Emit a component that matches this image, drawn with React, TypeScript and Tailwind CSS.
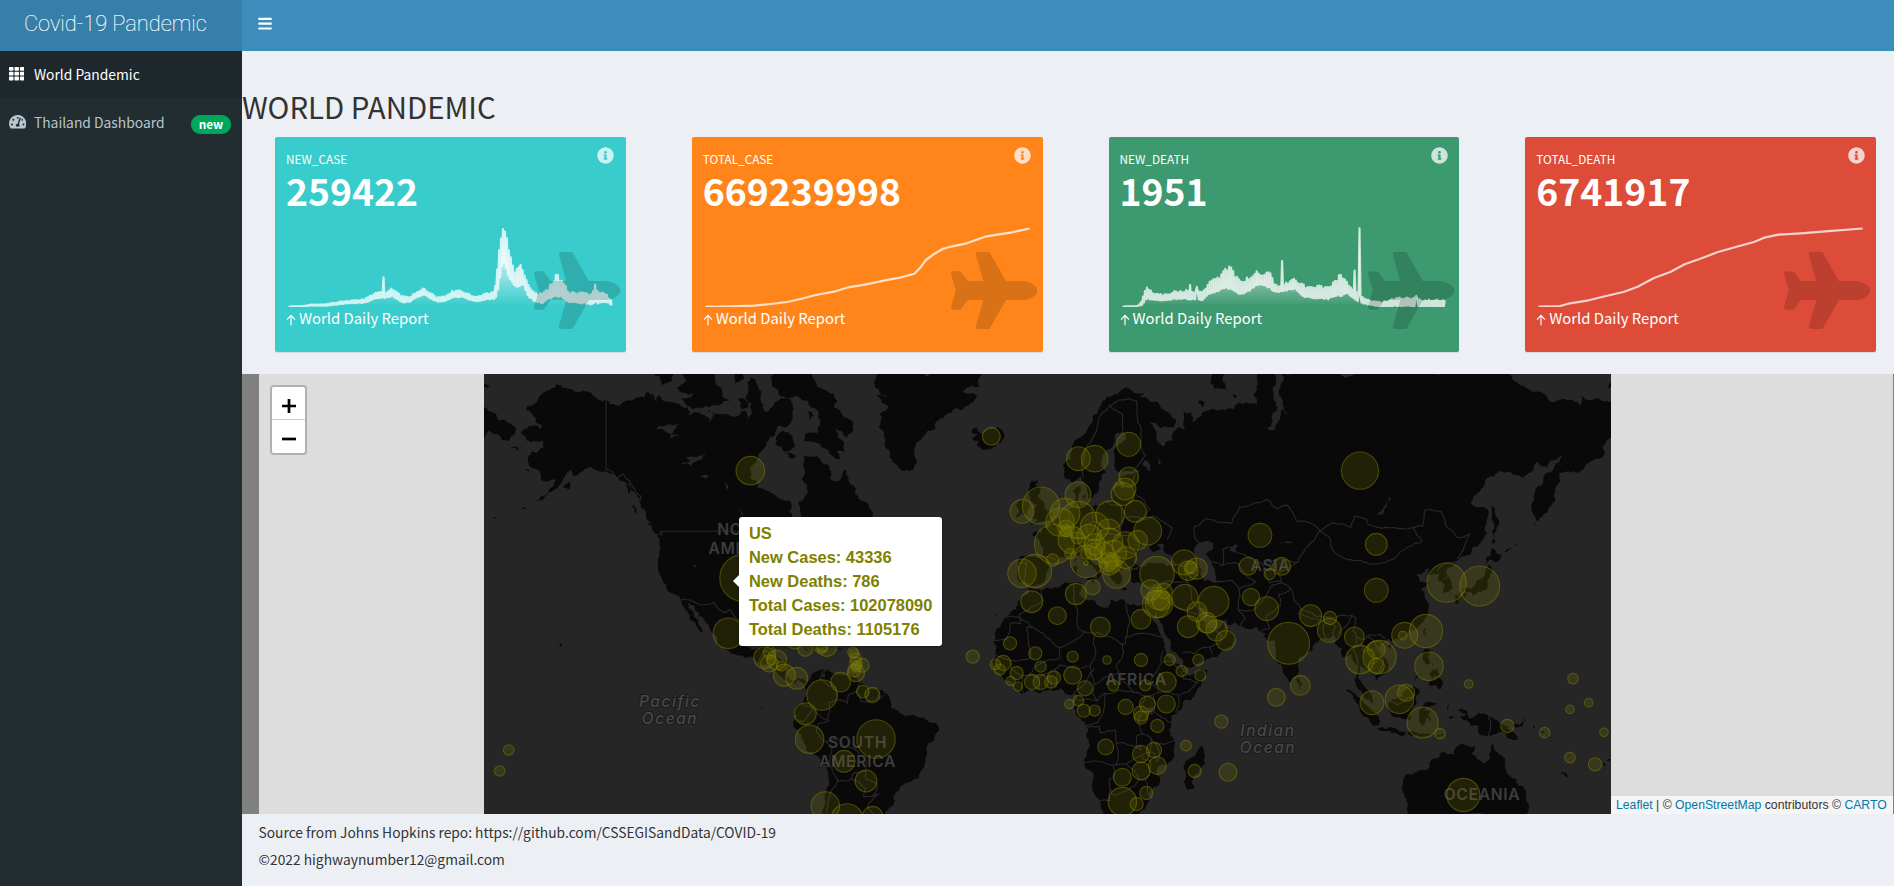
import React from "react";
import { FaBars, FaInfoCircle, FaPlane, FaTachometerAlt, FaTh } from "react-icons/fa";

/* ------------------------------------------------------------------ */
/* Map geometry                                                        */
/* ------------------------------------------------------------------ */

const WORLD = 1126.6;
const EQUATOR = 333.7;

type Pt = [number, number];

function project(lon: number, lat: number): Pt {
  const r = (lat * Math.PI) / 180;
  const m = Math.log(Math.tan(Math.PI / 4 + r / 2));
  return [((lon + 180) / 360) * WORLD, EQUATOR - (m * WORLD) / (2 * Math.PI)];
}

function parse(s: string): Pt[] {
  return s.trim().split(/\s+/).map((p) => {
    const [a, b] = p.split(",").map(Number);
    return project(a, b);
  });
}

function random(seed: number) {
  let s = seed;
  return () => {
    s = (s * 16807) % 2147483647;
    return s / 2147483647 - 0.5;
  };
}

/* Midpoint displacement gives coasts their ragged outline. */
function roughen(pts: Pt[], closed: boolean, amount: number): Pt[] {
  const rnd = random(pts.length * 97 + 13);
  let cur = closed ? [...pts, pts[0]] : pts;
  for (let k = 0; k < 3; k++) {
    const next: Pt[] = [cur[0]];
    for (let i = 1; i < cur.length; i++) {
      const [x0, y0] = cur[i - 1];
      const [x1, y1] = cur[i];
      const dx = x1 - x0;
      const dy = y1 - y0;
      if (Math.hypot(dx, dy) > 3) {
        const d = rnd() * amount;
        next.push([(x0 + x1) / 2 - dy * d, (y0 + y1) / 2 + dx * d]);
      }
      next.push([x1, y1]);
    }
    cur = next;
  }
  return cur;
}

function toPath(s: string, closed: boolean, amount: number) {
  return (
    "M" +
    roughen(parse(s), closed, amount)
      .map(([x, y]) => x.toFixed(1) + " " + y.toFixed(1))
      .join("L") +
    (closed ? "Z" : "")
  );
}

const LAND: string[] = [
  // Americas
  `-168.1,65.6 -166,66.3 -164,66.6 -161.8,66.1 -161.5,66.5 -163.5,67.1 -164.5,68 -166.4,68.4 -166.2,68.9 -163.5,69.3 -162.5,70 -160,70.6 -156.7,71.3 -154.5,70.9 -152,70.8 -149.5,70.5 -145,70 -141,69.6 -137.5,69 -135.5,69.4 -134,69.6 -131,69.9 -129,69.9 -128,70.5 -125,69.5 -124.3,70.1 -123,69.6 -120,69.4 -117,68.9 -115,68.8 -114,68.2 -115,67.9 -110,67.9 -108,67.4 -107.8,66.7 -106.5,68 -108.5,68.5 -105,68 -101,67.7 -98.5,67.8 -97.8,68.4 -96,68.2 -96,67.2 -94.5,68 -94.5,69.3 -96.4,70 -95.9,71.5 -94.6,72 -92.5,71.2 -91.8,69.7 -90.3,68.3 -88,68.8 -85.5,69.7 -84,69.8 -82,69.7 -81.3,69 -81.5,68.2 -81.3,67.4 -83.2,66.4 -85.8,66.6 -87,65.3 -89.8,64 -90.7,63.4 -92.5,62.6 -94.3,61 -94.7,60 -94.7,58.8 -93.2,58.7 -92.7,57.2 -90.8,57.2 -88.5,56.5 -85.5,55.3 -82.3,55.1 -82.3,53 -81.5,52 -80.5,51.3 -79,51.4 -78.7,52.5 -79.2,54 -79.6,54.7 -77.8,55.3 -76.5,56.5 -76.7,57.8 -78.5,58.8 -77.5,59.8 -77.8,60.8 -78,62.4 -75.8,62.3 -73.8,62.4 -71.5,61.2 -69.7,61 -69.5,59 -68,58.4 -66,58.8 -65.3,59.9 -64.5,60.3 -63.5,59 -62,57.7 -61.5,56.3 -60,55.2 -57.5,54.6 -57,53.7 -55.8,52.7 -56,51.9 -58.5,51.2 -60.2,50.2 -66.5,50.2 -68,49.2 -70,47.5 -68.3,48.5 -65,49.2 -64.3,48.8 -65.2,47.8 -64,46.1 -61,45.4 -65.5,43.5 -64.8,45.4 -67,45.1 -70.6,43.2 -70,41.8 -74,40.7 -75.2,38.8 -75.8,35.5 -79,33.3 -81.4,30.5 -80.2,26 -81,25.2 -82.7,28 -84,30 -88,30.3 -89.3,29.2 -94,29.6 -97,28 -97.4,26 -97.8,22.5 -97,20.5 -96,19 -94.5,18.2 -92,18.6 -90.7,19.5 -90.4,21 -87,21.5 -87.5,19.5 -88.2,17.5 -88.8,15.9 -86,15.9 -83.3,15 -83.6,12.5 -83.7,11 -82.5,9.3 -81,8.8 -79.5,9.5 -77.4,8.6 -76.8,8.2 -75.6,9.5 -75.3,10.7 -74,11.3 -71.7,12.4 -71.3,11.5 -71.9,10.4 -71.6,9.4 -71,9.8 -71.3,11 -70,12.1 -69.5,11.4 -68.3,10.7 -66,10.5 -64,10.5 -62.5,10.7 -61.8,9.8 -60.5,8.5 -58.5,7.3 -57,6 -54,5.9 -51.8,4.5 -50,1.8 -50,0.3 -48,-0.7 -44.5,-2.5 -41.5,-2.9 -39.5,-3 -37.2,-4.8 -35.3,-5.2 -34.8,-7.5 -36,-10.2 -38.5,-13 -39,-16 -39.7,-19 -41,-22 -44,-23.1 -46.5,-24.2 -48.5,-26 -48.7,-28.5 -50.5,-30.5 -52.5,-33 -54,-34.8 -58,-34 -62,-39 -73,-39 -71.7,-31 -71.2,-28 -70.6,-25 -70.2,-20 -70.4,-18.3 -72.5,-17 -76.2,-14 -77.2,-12 -78.8,-8.5 -79.8,-7 -81.2,-6 -81.3,-4.6 -80.3,-3.4 -79.8,-2.3 -80.9,-2.2 -80.5,-0.6 -79.9,0.9 -78.8,1.6 -77.2,3.8 -77.5,6.5 -78.2,8 -79.5,9 -80.4,8.2 -80.3,7.4 -82.2,7.8 -83.6,8.5 -85,9.8 -85.8,10.5 -87.5,12.9 -89.5,13.5 -92,14.5 -94.5,16.2 -96.5,15.7 -99.5,16.7 -102,18 -104.5,19.2 -105.5,20.4 -105.5,22 -108,25 -109.4,26.7 -111,28 -112.3,29.5 -113,31.1 -114.8,31.8 -114.7,30.3 -113,28.4 -111.5,26.5 -110.5,24.5 -109.5,23.1 -110.3,23.5 -112,25 -112.3,26.2 -114.3,27.2 -114.2,28.3 -115.8,30.2 -117.1,32.5 -118.4,33.8 -120.6,34.5 -121.8,36.6 -123.7,38.9 -124.4,40.4 -124.2,42 -124.5,43 -123.9,46.2 -124.7,48.4 -122.5,47.5 -122.8,49 -124.5,50 -127,51 -128.3,53 -130.3,54.7 -131,56 -133.5,58 -136,58.5 -139.5,59.6 -143,60 -146,60.8 -148.5,60 -151.5,59.3 -151.5,61 -154,59.4 -156.5,57.3 -161,55.3 -164.8,54.6 -162,55.8 -160,56 -157.7,57.6 -157,58.8 -159,58.5 -162,58.7 -162,59.8 -164.5,60.5 -166,61.6 -164.7,63.1 -161,63.6 -161,64.5 -163.5,64.5 -166.3,64.6`,
  // Greenland
  `-55,73.5 -55.5,71.5 -54,70.8 -51,70 -54.8,70.2 -53,69.3 -51,69 -53.5,68 -53.8,66.5 -52,64 -50,62 -48,61 -44,60 -42.8,60.3 -42.5,62.5 -40,65 -36,66 -32,68 -27,68.5 -22.5,70.1 -27,70.6 -24,71.2 -21.8,71 -22,73.5`,
  // Canadian Arctic
  `-90,74 -88,71.2 -85,70 -82,69.9 -79,69.9 -76,69 -73,68.2 -72.5,67 -73.5,65.5 -77.5,65.3 -78,64.5 -74.5,64.4 -72,63.6 -68.8,62.5 -66,62 -67.5,63.2 -64.8,62.8 -65,64 -68,66.2 -64,65 -62,66.8 -64,67.5 -68,68.7 -67,69.5 -71,70.7 -75,72 -78,73.5`,
  `-87,64 -84,63 -80.5,63.8 -84.5,65.9`,
  `-76.5,68.3 -74.5,67.8 -76,67.2`,
  `-84,62.8 -82,62 -80,62.5`,
  `-105,69 -101.5,69.5 -104.5,71 -105,73.5 -118,73.5 -115,71.6 -118.5,71 -113,70.3 -117.2,69.8 -113.5,68.6 -108,68.8`,
  `-125.5,72.2 -123,71.2 -120,71.6 -118,73.5 -125,73.5`,
  `-99,69.8 -98,68.7 -95.5,68.8 -96.5,69.6`,
  `-102,73 -100,71.3 -97,71.8 -97,73.5 -102,73.5`,
  `-171.5,63.6 -169,63.1 -169,63.5`,
  `-167,60.2 -165.5,59.9 -166,60.4`,
  `-154.7,57.3 -153,57 -152.3,58.2 -153.5,58`,
  `-168.6,53 -166.5,53.6 -167.5,53.7`,
  `-177,51.7 -176,51.9 -176.6,51.6`,
  `-174.5,52.1 -173,52.3 -174,52.3`,
  `-128.2,50.8 -125.8,48.9 -123.5,48.4 -125,50.1`,
  `-133,54 -131.6,52.5 -131.8,54`,
  `-134.7,58.1 -133,56 -134,56.4`,
  `-78.3,18.4 -76.3,18 -77,17.8`,
  `-74.4,18.6 -72.7,19.9 -68.4,18.6 -71,18.2`,
  `-67.2,18.4 -65.7,18.3 -66,18`,
  `-61.8,10.7 -61,10.8 -61.1,10.1`,
  `-155.9,20.1 -154.9,19.5 -155.7,19`,
  `-156.6,21 -156.1,20.7 -156.5,20.7`,
  `-158.2,21.5 -157.7,21.3 -158.1,21.3`,
  // Far-east Russia across the date line
  `-181,68.9 -178.5,68.3 -175,67.2 -172,66.9 -169.8,66.1 -172,64.5 -174.5,64.8 -176,65.5 -178.5,66 -180,65 -181,65`,
  `-181,71.2 -178,71.1 -179,70.9 -181,70.9`,
  // Iceland, Britain, Ireland
  `-24.2,65.6 -22.5,66.4 -21,65.5 -18,66.1 -16,66.4 -13.7,65 -15,64.3 -18.8,63.4 -22.6,63.9 -22,64.5 -24,64.9 -22,65.4`,
  `-5.5,50.1 -3,50.7 1.3,51.1 1.7,52.7 0.2,53 -1.3,54.8 -3,56 -2,57.6 -4,57.8 -3.1,58.6 -5,58.5 -6,57 -5,54.8 -3,54.2 -4.5,53.2 -4.5,52.2 -5.2,51.7 -3,51.4`,
  `-10,51.8 -6.4,52.2 -6,53.5 -5.6,54.6 -8,55.3 -10,54.2 -9,53.2`,
  // Eurasia and Africa
  `-9.5,38.7 -8.9,41 -9.2,43.1 -8,43.7 -4,43.4 -1.5,43.4 -1.2,45 -2.5,47.2 -4.6,48 -4.6,48.6 -1.6,48.7 -1.8,49.7 0.2,49.6 1.6,50.8 4,51.8 5,53.2 8,53.7 8.6,54.8 8.1,56.8 10.6,57.7 10.2,56.4 9.7,55 11,54.1 12.5,54.4 14.2,53.9 18.5,54.7 19.8,54.5 21,55.5 21.2,57.1 22.7,57.6 24.3,57.1 24.3,58.3 23.5,59.1 26,59.6 30.1,59.9 28,60.5 23,59.9 21.4,60.8 21.4,62.6 25.2,65 24,65.8 22,65.5 21.3,64.3 17.5,62.3 17.1,61 19,59.9 16.7,58.5 16.3,56.6 14.3,55.5 12.9,55.5 11.2,58.5 10.6,59.3 8,58.1 5.6,58.8 5,61 8,63.5 12,65.5 14.5,67.8 17,69 20,70 25,71 31,70.3 28.5,69.9 33,69.4 38,68.3 41,67.3 40.5,66.4 36,66.3 32.5,67.1 34.7,64.8 37.5,63.9 38,64.5 40.3,64.6 40,65.5 42.3,66.4 44.2,66.1 43.5,68.2 46,68.2 46.3,66.9 48.5,67.6 54,68.4 59.5,68.6 61,69.3 65,69.2 68.5,68.2 67,69.5 66.8,71 69,73.5 72.7,73.5 72,71 73.5,68.8 71.5,66.5 70,66.2 72.5,66 74,67.2 74.8,68.6 77.5,67.7 75.3,69.4 74.5,71 75,72.5 78,72.3 80,73.5 140,73.5 141,72.7 150,71.5 153,70.9 160,69.7 161,69.4 168,69.6 170.5,69 170.6,70 176,69.8 181,68.9 181,65 178.5,64.5 178,62.6 174.5,61.8 170.4,60 166,60 163.5,59.8 163,57.8 162,56.2 162,54.8 160,53 158.3,52 156.7,51 156,52 155.6,55.5 156,57 158.5,58.5 161.8,60.4 163.8,61.8 164.5,62.5 160.5,61.7 160,60.6 156.5,61.6 154.5,59.8 152,59 149,59.5 142.7,59.2 138.5,57 135.3,54.8 137.5,53.8 141,53 140.4,51 140.5,48.5 138,46.3 135.3,43.9 132,43.2 130.6,42.4 129.7,41 127.5,39.8 127.5,39.2 129,37.5 129.4,35.5 126.5,34.4 126.5,37 124.8,38 125.2,39.5 121.5,39 122,40.6 120.8,40.4 117.8,39 119,37.3 122.4,37.3 119.4,35.2 120.9,32.8 121.8,31.5 121.8,29 119.5,26 118,24.4 114.2,22.4 110.5,21.2 109.8,20.4 109,21.6 106.6,20.2 105.8,19 107.5,16.8 109.2,13.5 109,11.6 107,10.4 105,8.7 104.8,10.2 102.8,11.8 101,12.7 100.2,13.4 99.8,11.5 99.3,9.4 100.5,8 101.5,6.8 103.4,4.5 104.2,1.4 103.4,1.5 101.3,2.9 100.4,5.5 98.5,8 98.7,10.5 97.7,15 97.2,16.8 94.4,16 94.2,18.5 92,21.3 91.5,22.7 88.5,21.7 86.5,20.4 85,19.5 82.3,16.7 80.2,15.3 80.2,12.5 79.8,10.3 78.2,8.8 77.5,8.1 76.3,10 74.6,13.8 73,18 72.7,21 70.5,20.8 69,22.2 70,22.8 68.3,23.6 67,24.9 62,25.2 57.5,25.7 56.8,27.1 54,26.6 51.5,27.9 50,30.2 48,30 48.5,28 50.2,26.5 50.8,24.8 51.5,26 51.5,24.5 54,24.1 56.3,26.3 56.8,24.2 59.8,22.4 57.8,19 55,17 52,15.6 45,12.8 43.4,12.7 42.8,15.5 39.1,21.3 37,25 35,28 34.9,29.5 34.3,27.8 32.6,29.9 35.5,24 37.2,21 37.4,18.8 39.5,15.5 43.2,12.4 43.3,11.5 44.5,10.5 51.2,11.9 51,10.4 49,6.8 46,2.5 42,-1 39.5,-4.5 39,-7 40.5,-10.5 40.7,-15 37,-17.8 34.8,-19.8 35.5,-24 32.8,-25.8 32.5,-28.5 30,-31.3 27,-34 18,-34 17,-29.5 15,-26.5 14.4,-22.5 11.8,-18 13.7,-12 12.3,-6 9,-1 9.7,3.8 8.5,4.5 6,4.3 4.3,6.3 1,5.8 -2,4.8 -7.5,4.4 -9.5,5.6 -13,8.5 -15,11 -16.8,12.5 -17.5,14.8 -16.3,19 -17,21 -15,25 -13,27.8 -9.8,29.8 -9.5,32 -6.5,34 -5.8,35.8 -2,35.1 5,36.8 10,37.3 11,36.8 10.2,34.3 11.5,33 15.3,32.3 19.5,30.4 20.2,32.5 23,32.6 29,30.9 32,31.3 34.3,31.4 35.9,35.5 36,36.8 32.5,36.1 30.6,36.8 27.4,37 26.3,39.4 29,40.4 29,41.1 31.5,41.3 35,42 38,41 41.5,41.5 39,43.9 37,45 39,47.1 35,46.2 36.5,45.3 33.7,44.4 32.6,45.4 33.5,46 31,46.6 29.7,45.3 28,43.3 28,41.9 29,41.2 26.2,40.6 23.8,40.3 22.7,40.4 24,38 22.8,36.6 21.5,37.2 19.5,40.8 19.5,41.9 16,43.5 13.6,45.4 12.4,44.9 14,42.6 16,41.5 18.4,40 16.9,40.4 16,38 15.7,40 12.3,41.7 10.3,43.5 8.9,44.4 7,43.5 4,43.5 3.1,42.2 -0.3,39.3 -0.8,37.7 -2.2,36.7 -5.5,36.1 -6.5,37 -9,37`,
  `52,71.5 53.5,70.8 57.5,70.6 56,72 56,73.5 52.5,73.5`,
  `48.2,69.3 49.5,68.8 50.2,69.2 49,69.6`,
  `58.6,70.2 60,69.8 60.5,70.1`,
  `179.5,71.3 181,71.5 181,70.8 178.8,70.9`,
  // Mediterranean and Baltic islands
  `12.4,38 15.6,38.2 15.1,36.7`,
  `8.2,41 9.7,41 9.6,39.2 8.4,39`,
  `8.6,42.5 9.4,43 9.4,41.4`,
  `23.5,35.5 26.3,35.2 24.7,34.9`,
  `32.3,35 34.5,35.6 33.6,34.6`,
  `11.1,55.7 12.5,56.1 12.2,54.8`,
  `22,58.4 23.2,58.6 22.5,58.2`,
  // Indian Ocean and Atlantic
  `79.8,8 80.2,9.7 81.8,7.5 80.6,6`,
  `44.3,-20 44,-17 47,-15.3 49.3,-12 50.4,-15.6 49,-19 47,-25 45,-25.5 43.4,-23`,
  `-17.9,28.7 -17.7,28.5 -17.9,28.5`,
  `-16.8,28.3 -16.2,28.4 -16.6,28`,
  `-14.3,28.1 -13.9,28.6 -14,28.2`,
  `-69.9,18.5 -69.5,18.5 -69.7,18.4`,
  `-91.4,0 -91,-0.2 -91.2,-0.9`,
  // East Asia
  `142,54.2 142.9,53 143.5,49.2 142.6,47.5 143.3,46.7 142,46.2 142,51.5`,
  `141.7,45.5 143.5,44.2 145.4,43.9 143.3,42.1 141,42.5 140.1,41.6 140.3,43.3 141.4,43.4`,
  `141,41.4 142,39.5 140.9,38 140.7,35.8 138.8,34.7 136,33.7 135,34.7 131,34 133,35.5 136,35.8 137,37.3 139.5,38.5 140,40.5`,
  `130,33.8 132,33.2 131,31.3 130.2,32`,
  `132.5,34 134.5,34 133.2,32.9`,
  `146,44.2 148.5,45.4 147,44.6`,
  `149.5,46 150.3,46.3 149.9,45.8`,
  `155.3,50.2 156.2,50.8 155.8,50.2`,
  `120.1,23.2 121.5,25.2 121,22.1`,
  `108.7,19.3 110.8,20.1 109.6,18.2`,
  `120,16.2 120.6,18.5 122.3,18.2 121.5,15.8 124,13 121,13.7`,
  `122,7 125,9.7 126.3,8.5 125.4,5.7 124,7.2`,
  `122,10.5 124.8,12.5 125.2,10.2 123,9.3`,
  `117.3,8.4 119.4,10.8 118.5,9.8`,
  `109.2,1.8 111.5,2.6 113.5,3.6 116.8,6.9 119,5.2 117.8,3.5 117.8,1 116.2,-3.5 114.3,-3.6 110.3,-2.8 109,0.3`,
  `95.4,5.5 97.5,5.1 100.5,2.2 103.8,-1 106,-3 105.8,-5.8 104.5,-5.8 101,-2.8 98.7,1.5`,
  `105.3,-6.7 108.5,-6.8 111,-6.5 114.4,-7.7 114.4,-8.6 110,-8 106.5,-7.4`,
  `115,-8.3 119,-8.4 122.8,-8.4 121,-8.9 117,-9`,
  `123.6,-10.3 127,-8.4 125,-9.2`,
  `119,-9.6 120.8,-10.2 119.5,-9.4`,
  `119.4,-5.5 119,-3 120.2,0.8 124.8,1.5 121,0.4 120.5,-1 123.2,-0.8 121.7,-2 122.7,-4.6 121.2,-2.8 120.4,-5.5`,
  `127.5,1.8 128,0.8 128.5,1.5 127.8,-0.8`,
  `128,-3.2 130.7,-3.2 129,-3.5`,
  `131,-0.8 134,-0.9 134.5,-3.2 138,-1.7 141,-2.6 145.8,-5.3 147.5,-6 147,-6.8 150.8,-10.4 147.5,-9.8 144.5,-7.7 141,-9.1 138,-8.3 138,-5.5 133,-4 132,-2.8 134,-2.3`,
  `148.5,-5.7 151,-5.5 152,-4.2 152,-5.5 150,-6.3`,
  `150.7,-2.7 152.9,-4.2 152.5,-4.3`,
  `154.7,-5.4 155.9,-6.7 155.3,-6.5`,
  `157,-7.5 159.5,-8.5 161,-9.6 159.8,-9.6`,
  `164,-20.1 167,-22.2 165.8,-21.8`,
  `166.6,-14.8 167.1,-15.5 166.8,-15.5`,
  `177.5,-17.6 178.6,-18 178,-18.3`,
  `178.8,-16.7 180,-16.2 179.5,-16.8`,
  // Australia
  `113.7,-22.5 114,-21.8 117,-20.6 121,-19.5 122.3,-17 124,-16 126,-14 128,-14.8 129.8,-15 130.8,-12.3 132.5,-11.3 136.8,-12.2 135.5,-14.8 139.5,-17.5 141,-16.5 141.7,-12.8 142.5,-10.7 143.6,-14 145.3,-15 146.3,-19 149.5,-22 153,-25.5 153.6,-29 152.5,-32.5 150,-37 116,-37 115,-33.5 115.5,-31.5 114.2,-27.5 113.5,-26 113.5,-24`,
];

const WATER: string[] = [
  `47,45 49,46.5 51.5,47 53.2,46.5 53,45.2 51.3,44.5 50.5,44 52.5,42.3 52.8,41.3 53.8,39 54,37 50,37.4 49.3,40.3 47.5,43`,
  `-125,66.2 -122,65.8 -119,65.4 -117.5,65.2 -120.5,64.9 -119.5,65.9 -118,66.8 -121,66.7`,
  `-117,61.2 -114,60.9 -112.5,61.5 -109,62.8 -112,62.2 -115.5,62.2 -114,61.6`,
  `-111,59.2 -107,59.1 -109.5,58.9`,
  `-103,58.2 -101.7,56.8 -102.6,57.2`,
  `-99,53.8 -97,50.7 -97.5,52.2`,
  `104,51.5 107,52.3 109.8,55.5 109.2,55.7 106.5,53`,
  `30.5,61 32.5,60 33,61 31,61.7`,
  `34.5,62.3 35.8,61 36.2,61.6`,
  `58.2,44.6 60,46.2 61.2,46 60,44.2`,
  `73.7,45.6 76,46.7 79,46.5 75,46.4`,
  `31.8,-0.3 33.9,0.1 33.7,-2.3 32,-2.4`,
  `-112.9,41.6 -112.2,41.2 -112.5,40.8`,
];

const BORDERS: string[] = [
  `-141,69.6 -141,60.3`,
  `-122.8,49 -95.2,49`,
  `-141,60.3 -139,60 -137.5,58.9 -135.5,59.6 -133.5,58.4 -131.5,56.6 -130,55.9 -130,55`,
  `-117.1,32.5 -114.8,32.6 -111,31.3 -108.2,31.4 -106.5,31.8 -104.5,29.6 -103,29 -101.4,29.8 -99.5,27.5 -97.2,26`,
  `-92.2,14.6 -91.5,16 -90.5,17.8 -89.2,17.8 -89,15.9`,
  `-72,11.9 -72.7,9 -70,7 -67.5,6.2 -67.3,2.5 -69.8,1.7 -69.5,-0.5 -70,-4.2 -72.8,-2.4 -75.3,0 -78.8,1.4`,
  `-80.2,-3.8 -78.5,-4.5 -75.3,-1 -75.3,0`,
  `-70,-4.2 -73,-5 -73.8,-7.5 -72.5,-9.5 -70.6,-11 -68.7,-12.5 -69.5,-17.5 -70.3,-18.3`,
  `-70.6,-11 -66,-10 -65.3,-12 -60.5,-14 -58,-16.5 -58,-20 -62,-20.5 -62.5,-22.2 -67,-22.8 -68.5,-20 -69.5,-17.5`,
  `-67,-22.8 -68.5,-25 -70,-29 -70.3,-33`,
  `-62.5,-22.2 -58,-25 -58.7,-27.3 -56,-27.3 -54.6,-25.5 -54.3,-24 -57.8,-22.2 -58,-20`,
  `-56,-27.3 -53.7,-26.5 -57.6,-30.2 -53.5,-33`,
  `-67.3,2.5 -64,1.5 -63.5,4 -60.7,5.2 -60,8`,
  `-60.7,5.2 -59.5,2 -56.5,2 -52,4`,
  `-57,5.8 -57.8,3 -56.5,2`,
  `-54,5.6 -54.5,2.4`,
  // Africa
  `-13.2,27.7 -8.7,27.7 -8.7,26 -12,26 -12,23.4 -13,21.3 -17,21`,
  `-8.7,27.4 -4.8,25 1.2,21.1 3.2,19 5.8,19.5 12,23.5 10,24.5 9.5,30.3 8.3,33 8.3,36.8`,
  `-8.7,27.4 -8.7,28.7 -3.6,31 -1.2,32.3 -2,35`,
  `25,31.6 25,20 24,20 24,19.5 16,23.5 15,22.9 12,23.5`,
  `25,22 36.8,22`,
  `24,19.5 24,15.7 22,13 23,11 15,7.5 13.7,13.3 15.5,17 15,22.9`,
  `-4.8,25 -6.5,25 -5.5,15.5 -12,15 -16.3,16.5`,
  `-12,15 -11.5,12.4 -8,10.2 -6,10.2 -4,13 0,15 4,15.5 4.2,19`,
  `-6,10.2 -2.8,9.6 0,11 2.5,12.2 4,13.5 13.7,13.3`,
  `-2.8,9.6 -3,5.1`,
  `0,11 1.2,6.2`,
  `2.5,12.2 2.7,6.4`,
  `-8,10.2 -8.2,7.5 -7.5,4.5`,
  `8.5,4.7 11,6.7 13.7,11 15,12.5`,
  `15,7.5 14.5,5 16,2.2 9.8,2.3`,
  `16,2.2 18.5,4.5 18,-1 16,-4.8 12.2,-5.8`,
  `18.5,4.5 27.3,5 24,8.7 23,11`,
  `27.3,5 31,3.8 34,4.2 35.8,4.8 33,8 34,10.5 36.5,14.3 37,18`,
  `36.5,14.3 40,14.5 42.3,12.5`,
  `35.8,4.8 41.9,4 45,5 48,8 43.5,9.2 42.8,11`,
  `41.9,4 41,-1.6`,
  `34,4.2 34,-1 37.7,-3.5 39.2,-4.7`,
  `34,-1 30.5,-1 29.2,-3 30.5,-8.3 28.5,-9 28.4,-12.2 29.8,-12.2 29.8,-13.4 24,-11 22,-11.2 21.8,-7.3 17,-8 16.6,-5.9 12.4,-5.9`,
  `31,3.8 31,2.3 29.6,-1.3`,
  `30.5,-8.3 33,-9.5 34.6,-11.5 40.4,-10.5`,
  `33,-9.5 33,-14 30.3,-15 30.4,-16 33,-16.6 32.6,-21 31.3,-22.4 32,-26.8`,
  `34.6,-11.5 35.8,-16 35,-17 34.3,-14.5 33,-14`,
  `22,-11.2 22,-17.8 25.3,-17.8 28.5,-15.8 30.3,-15`,
  `11.8,-17.3 18.5,-17.4 23.3,-17.8`,
  `25.3,-17.8 29.3,-22.2 31.3,-22.4`,
  `29.3,-22.2 25.5,-25.7 20.8,-26.8 20,-24.8 20,-28.5 16.5,-28.6`,
  `20,-24.8 20,-22 21,-22 21,-18.3`,
  // Europe
  `6.2,53.5 7,52 6,50 8,48.9 7.5,47.6 10.5,47.5 13,47.5 13,48.8 12.2,50.3 14.8,51 14.3,53.9`,
  `-1.7,43.3 3,42.5`,
  `-8.8,41.9 -6.5,41.8 -7,39 -7.4,37.2`,
  `14.8,51 18.8,49.6 22.6,49.1 24,50.8 23.6,52.6 23.5,54 19.8,54.4`,
  `17,48.3 22.2,48.2 26.6,48.3 30,46.4`,
  `22.6,44.5 28.5,43.8`,
  `23.6,51.6 31,51.4 34,52 40,49.6 38.3,47.2`,
  `28.2,56 31,55 32.7,53.4 31.5,52.3`,
  `27.4,57.5 28,59.5`,
  `11.5,59 12.2,63.3 14,64.5 16.5,67.5 20,69 24,68 24,65.9`,
  `20,69 26,69.8 28.5,69.5 28.6,68.3 30,66 29.8,63.8 31.3,62.5 28,60.6`,
  // Asia
  `49,46.4 47,48 47,50 51,51.6 55,50.8 59,50.7 61.5,53.8 66,54.5 70.5,55.2 73.5,53.5 76.8,54.2 80,51 83,51 87.3,49.1 85.5,47.2 82.5,45.3 80.3,43 80.2,42.2 74.5,43 71,42.3 69,41.3 66,42.8 61.2,44.2 58.6,45.6 56,45 56,41.3 52.7,42.2`,
  `56,41.3 60,42 62.5,40 66.6,37.3 61.3,35.4 59,37.6 54,37.3`,
  `71,42.3 73,40 69,40.2 71,37 73.7,37.5 74.8,37.3 73.6,39.5 76.5,40.5 80.2,42.2`,
  `61.3,35.4 60.9,31.5 61,29.8 66.3,29.9 69.3,33 71.5,36.3 74.8,37`,
  `61,29.8 63.2,27.2 61.6,25.2`,
  `74.8,37 77.8,35.5 78.8,32.5 81,30.2 86,28 88.8,27.8 92,27.6 97.3,28.3 98.7,27.5 97.6,24 99,22 101.2,21.3 103,22.7 106.5,22.8 108,21.5`,
  `68.2,23.7 71,24.5 70,28 74.5,31 74,34 77.8,35.5`,
  `81,30.2 80.2,28.8 84,27.5 88,26.5 88.8,27.8`,
  `88.8,21.8 88.5,26.3 92,25.2 91.2,23.3 92.3,20.8`,
  `97.3,28.3 94.5,24.5 92.6,22.2`,
  `99,22 97.6,18.5 98.8,16.3 99.2,12 98.8,10.2`,
  `100.1,20.4 101.2,17.5 104,18.3 105.6,14.5 102.5,13.6 102.8,11.8`,
  `102,22.4 104.8,20 107.4,15 106,11.2 104.5,10.4`,
  `87.3,49.1 92,50.7 97,49.8 98.2,52 102,51.5 102.5,50.4 107,49.6 113,49.6 116.7,49.8 119.8,46.8 115,45.5 111.8,43.6 110,42.7 105,41.6 100,42.6 96,42.7 91,45.1 90,47.8 87.3,49.1`,
  `116.7,49.8 119.8,50 120.8,53.3 125.8,53 127.5,50 131,47.7 135,48.4 133,45 131,42.8`,
  `130.6,42.3 128,42 124.4,40`,
  `126.7,37.8 128.4,38.6`,
  `36,36.8 42.3,37.2 44.8,37.2 44,39.5 43.5,41.1 41.5,41.5`,
  `44.8,37.2 46,33.5 48.5,30`,
  `35.8,33 39,32 46.5,29 48.4,28.6`,
  `44.8,39.7 48,38.8`,
  `43.5,41.1 47,41.8`,
  `43,17.3 47,17 49,18.6 52,19 52.8,16.6`,
  `52,19 55,20 55.5,22.8 51.6,24.2`,
  `109.6,2 111.8,1 115,3 117.6,4.1`,
  `141,-2.6 141,-9.1`,
];

/* Case markers: [origin x, origin y, "cx,cy,r ..."] in thirds of a pixel. */
const MARKERS: [number, number, string][] = [
  [216, -14, `151,332,44 130,654,72 874,229,28 1135,296,37 1184,296,41 1286,253,37 1286,351,31 1275,387,34 1268,402,36 1134,404,40 1023,437,57 966,454,37 1095,460,46 1134,480,57 1230,465,44 1306,454,34 1343,513,43 1080,486,44 1098,505,26 1098,512,19 1063,552,61 1184,500,44 1226,512,36 1167,530,38 1115,540,42 1132,534,19 1228,545,42 1184,553,33 1184,568,32 1182,575,27 1277,556,42 1313,541,31 1160,604,50 1110,581,17 1158,609,8 1158,582,17 1058,600,20 1005,633,51 966,640,44 1213,578,32 1241,580,40 1277,593,34 1250,643,43 1228,617,30 1240,612,26 1235,603,24 1225,605,30 1371,641,53 1178,682,24 1128,702,33`],
  [496, -14, `612,607,39 650,626,33 625,632,31 632,622,20 513,690,32 554,693,24 537,732,42 535,715,35 545,722,31 528,733,42 615,712,40 701,725,47 840,526,37 804,619,28 905,619,28 869,642,18 813,711,27 860,746,37`],
  [456, 226, `771,35,31 745,80,34 800,68,32 803,73,28 830,91,33 857,121,31 603,58,31 481,81,31 352,47,28 275,5,34 210,130,21 286,160,21 398,170,18 501,180,14 603,180,21 689,180,18 775,180,18 725,213,18 781,226,18 679,246,31 616,256,18 520,256,18 98,170,21 190,189,24 166,193,17 179,209,18 230,219,21 212,243,15 234,259,15 276,246,24 302,246,24 302,200,18 333,246,20 342,233,21 398,226,28 435,265,24 415,302,17 388,312,15 431,332,21 464,332,18 557,321,24 622,313,25 679,312,28 603,341,24 603,353,21 652,378,21 497,441,25 603,462,27 642,450,24 652,497,28 603,513,28 547,532,28 547,605,44 590,612,21 619,579,21 764,513,21 738,437,17 844,365,21 864,517,28`],
  [776, 226, `86,130,64 121,256,31 49,292,28 152,47,34 210,54,21 208,91,37 283,111,31 300,179,44 359,171,51 349,149,28 349,199,25 434,106,40 428,107,14 498,93,51 507,199,44 418,298,44 438,278,27 336,308,37 488,368,48 540,401,17 626,252,14 742,378,21 854,398,17 939,236,17 986,308,14 930,328,14 1032,397,14 930,473,17 1005,493,21 610,585,51`],
  [806, -14, `210,332,57 259,553,34 259,691,37 470,668,60 569,678,61`],
  [-4, 226, `745,100,47 854,173,34 890,180,31 869,157,20 868,190,27 904,198,16 875,180,15 913,226,34 950,235,34 945,118,30 976,146,24 1023,142,20 1027,140,18 1040,140,31 1119,157,17 1123,160,15 1127,175,18 1128,190,20 1130,200,17 1130,196,14 1147,196,22 1122,212,20 1128,219,27 1026,285,47 1082,246,31 1148,275,20 1177,285,24 976,341,34 989,418,44 1188,417,59 1092,484,34 1158,543,34 1036,618,44 1101,660,50 1178,650,32 86,450,17 59,513,17`],
];

function Label({ x, y, text, ocean }: { x: number; y: number; text: string[]; ocean?: boolean }) {
  return (
    <>
      {text.map((t, i) => (
        <text
          key={t}
          x={x}
          y={y + i * (ocean ? 16.5 : 19)}
          textAnchor="middle"
          fontSize={ocean ? 15.4 : 15.6}
          fontWeight={ocean ? 500 : 600}
          fontStyle={ocean ? "italic" : "normal"}
          letterSpacing={ocean ? 1.6 : 0.7}
          fill={ocean ? "#484848" : "#3d3d3d"}
          stroke={ocean ? "#1a1a1a" : "#0c0c0c"}
          strokeWidth={ocean ? 2 : 1}
          paintOrder="stroke"
          fontFamily="Inter, 'Liberation Sans', sans-serif"
        >
          {t}
        </text>
      ))}
    </>
  );
}

function WorldMap() {
  return (
    <svg className="block h-[440px] w-[1127px] shrink-0 overflow-hidden" viewBox="0 0 1127 440">
      <rect width="1127" height="440" fill="#262626" />
      <g fill="#090909">
        {LAND.map((s, i) => (
          <path key={i} d={toPath(s, true, 0.42)} />
        ))}
      </g>
      <g fill="#262626">
        {WATER.map((s, i) => (
          <path key={i} d={toPath(s, true, 0.35)} />
        ))}
      </g>
      <g fill="none" stroke="#292929" strokeWidth="1.1">
        {BORDERS.map((s, i) => (
          <path key={i} d={toPath(s, false, i < 2 ? 0 : 0.2)} />
        ))}
      </g>
      <Label x={263} y={160.5} text={["NORTH", "AMERICA"]} />
      <Label x={373.5} y={373.5} text={["SOUTH", "AMERICA"]} />
      <Label x={652} y={311} text={["AFRICA"]} />
      <Label x={786.5} y={197} text={["ASIA"]} />
      <Label x={998} y={426} text={["OCEANIA"]} />
      <Label x={186} y={333} text={["Pacific", "Ocean"]} ocean />
      <Label x={784} y={362} text={["Indian", "Ocean"]} ocean />
      <g fill="#808000" fillOpacity="0.2" stroke="#808000" strokeOpacity="0.5" strokeWidth="1.1">
        {MARKERS.map(([ox, oy, list]) =>
          list.split(" ").map((c) => {
            const [x, y, r] = c.split(",").map(Number);
            return <circle key={ox + c} cx={ox + x / 3} cy={oy + y / 3} r={r / 3 - 0.4} />;
          }),
        )}
      </g>
    </svg>
  );
}

/* ------------------------------------------------------------------ */
/* Sparklines                                                          */
/* ------------------------------------------------------------------ */

/* Knots are x:high:low */
const NEW_CASE =
  "33:509:509 66:508:508 86:502:507 126:501:507 146:496:504 176:491:500 216:487:498 231:477:493 246:469:485 263:465:482 270:467:483 281:461:482 287:455:478 296:464:484 311:477:496 331:479:495 346:464:482 366:455:474 381:467:486 396:481:494 416:479:493 436:461:482 461:463:480 476:473:488 491:479:494 516:471:488 538:463:485 544:389:485 551:324:430 558:274:380 566:299:390 576:359:430 586:404:448 598:379:450 608:401:440 618:439:475 636:469:494 656:471:498 671:454:485 689:415:475 706:439:482 721:467:496 751:469:498 776:473:502 783:447:498 796:467:498 813:469:495 818:484:498 825:489:507";
const NEW_DEATH =
  "33:509:509 70:509:508 80:489:506 92:451:486 110:469:489 135:474:491 160:464:486 190:461:486 230:464:489 245:439:471 270:419:461 296:389:453 310:417:463 325:434:473 345:419:461 360:407:446 380:411:446 397:404:456 402:439:461 415:449:466 455:427:456 480:449:481 540:449:486 565:416:476 585:439:471 606:464:491 620:479:499 635:489:503 665:497:509 705:484:507 750:484:508 765:491:509 824:487:509";
const TOTAL_CASE =
  "33:509 73:509 153:506 193:501 233:495 268:485 303:474 348:464 383:451 423:443 473:430 513:421 545:410 558:394 573:369 593:351 615:335 638:328 673:319 718:299 783:286 827:274.5";
const TOTAL_DEATH =
  "33:509 86:507 106:500 156:490 196:478 241:465 276:449 316:423 356:405 391:382 426:367 471:346 516:330 561:315 586:302 621:293 676:289 736:283 827:274.5";

const sx = (x: number) => x / 2.45;
const sy = (y: number) => y / 3 - 84;

function bandPoints(data: string, spikes: Pt[]): Pt[] {
  const knots = data.split(" ").map((k) => k.split(":").map(Number));
  const rnd = random(4711);
  const out: Pt[] = [];
  let i = 0;
  let flip = false;
  const end = knots[knots.length - 1][0];
  for (let x = knots[0][0]; x <= end; x += 2.4) {
    while (i < knots.length - 2 && knots[i + 1][0] < x) i++;
    const [x0, h0, l0] = knots[i];
    const [x1, h1, l1] = knots[i + 1];
    const t = (x - x0) / (x1 - x0);
    const hi = h0 + (h1 - h0) * t;
    const lo = l0 + (l1 - l0) * t;
    const jitter = rnd() * (lo - hi) * 0.3;
    const spike = spikes.find(([p]) => Math.abs(p - x) < 1.21);
    out.push([sx(x), sy(spike ? spike[1] : flip ? hi + 1 + jitter : lo - 1 + jitter * 0.5)]);
    flip = !flip;
  }
  return out;
}

function linePoints(data: string): Pt[] {
  return data.split(" ").map((k) => {
    const [x, y] = k.split(":").map(Number);
    return [sx(x), sy(y)];
  });
}

function Sparkline({ id, points, fade }: { id: string; points: Pt[]; fade?: boolean }) {
  const d = "M" + points.map(([x, y]) => x.toFixed(1) + " " + y.toFixed(1)).join("L");
  const last = points[points.length - 1];
  return (
    <svg className="-mx-[11px] block h-[88px] w-[351px]" viewBox="0 0 351 88">
      <defs>
        <linearGradient id={id} x1="0" y1="35" x2="0" y2="85" gradientUnits="userSpaceOnUse">
          <stop offset="0" stopColor="#fff" stopOpacity="0.75" />
          <stop offset="1" stopColor="#fff" stopOpacity="0" />
        </linearGradient>
        <clipPath id={`${id}-plot`}>
          <rect x="0" y="0" width="351" height="86" />
        </clipPath>
      </defs>
      <g clipPath={`url(#${id}-plot)`}>
        {fade && <path d={`${d}L${last[0]} 85.5L13.5 85.5Z`} fill={`url(#${id})`} />}
        <path d={d} fill="none" stroke="#fff" strokeOpacity="0.75" strokeWidth="2.2" strokeLinejoin="round" />
      </g>
    </svg>
  );
}

/* ------------------------------------------------------------------ */
/* Page                                                                */
/* ------------------------------------------------------------------ */

const CARDS = [
  {
    title: "NEW_CASE",
    value: "259422",
    bg: "bg-[#39cccc]",
    points: bandPoints(NEW_CASE, [[266, 421], [558, 276]]),
    fade: true,
  },
  { title: "TOTAL_CASE", value: "669239998", bg: "bg-[#ff851b]", points: linePoints(TOTAL_CASE), fade: false },
  {
    title: "NEW_DEATH",
    value: "1951",
    bg: "bg-[#3d9970]",
    points: bandPoints(NEW_DEATH, [[198, 444], [215, 450], [425, 372], [602, 401], [614, 274], [753, 477]]),
    fade: true,
  },
  { title: "TOTAL_DEATH", value: "6741917", bg: "bg-[#dd4b39]", points: linePoints(TOTAL_DEATH), fade: false },
];

function Card({ title, value, bg, points, fade }: (typeof CARDS)[number]) {
  return (
    <div className={`relative h-[215px] rounded-[2px] px-[11px] pt-[11px] text-white shadow-[0_1px_1px_rgba(0,0,0,0.1)] ${bg}`}>
      <div className="h-[22px] text-[11.8px] leading-[22px]">{title}</div>
      <div className="h-[51px] text-[37.35px] leading-[40px] font-bold">{value}</div>
      <Sparkline id={title} points={points} fade={fade} />
      <div className="flex h-[18px] items-center text-[14.85px] leading-[18px]">
        <svg className="mt-[3px] mr-[3px] h-[12px] w-[10px]" viewBox="0 0 10 12" fill="none" stroke="#fff" strokeWidth="1.2">
          <path d="M5 11.2V1.4M1 5.6L5 1.4L9 5.6" />
        </svg>
        <span>World Daily Report</span>
      </div>
      <FaInfoCircle className="absolute top-[10px] right-[11.3px] h-[17px] w-[17px] text-white/75" />
      <FaPlane className="absolute top-[114.5px] left-[259px] h-[77px] w-[86.5px] text-black/15" />
    </div>
  );
}

function Tooltip() {
  return (
    <div className="absolute top-[143px] left-[497px] h-[129px] w-[203px] rounded-[3px] bg-white pt-[4px] pl-[10px] font-['Liberation_Sans',Arial,sans-serif] text-[16.45px] leading-[24px] font-bold whitespace-nowrap text-[#808000] shadow-[0_1px_3px_rgba(0,0,0,0.4)]">
      <div className="absolute top-[57.5px] left-[-6px] h-0 w-0 border-y-[6.5px] border-r-[6.5px] border-y-transparent border-r-white" />
      <div>US</div>
      <div>New Cases: 43336</div>
      <div>New Deaths: 786</div>
      <div>Total Cases: 102078090</div>
      <div>Total Deaths: 1105176</div>
    </div>
  );
}

export default function App() {
  return (
    <div className="flex h-[886px] w-[1894px] flex-col overflow-hidden bg-[#ecf0f5] font-['Noto_Sans_CJK_SC',sans-serif] text-[#333]">
      <header className="flex h-[51px] shrink-0 bg-[#3c8dbc]">
        <div className="flex w-[242px] items-center bg-[#367fa9] pb-[3px] pl-[24px] font-['Roboto',sans-serif] text-[21.8px] font-thin text-white">
          <span className="whitespace-nowrap [-webkit-text-stroke:0.15px_white]">Covid-19 Pandemic</span>
        </div>
        <FaBars className="mt-[15.5px] ml-[16px] h-[15.4px] w-[14px] text-white" />
      </header>

      <div className="flex min-h-0 flex-1">
        <aside className="w-[242px] shrink-0 bg-[#222d32] text-[13.85px]">
          <div className="flex h-[47px] items-center bg-[#1e282c] pb-[1px] pl-[8.5px] text-white">
            <FaTh className="h-[15.4px] w-[15.4px]" />
            <span className="ml-[10px] leading-[22px]">World Pandemic</span>
          </div>
          <div className="flex h-[50px] items-center pl-[8.5px] text-[#b8c7ce]">
            <FaTachometerAlt className="mb-[2px] h-[15.4px] w-[17.4px]" />
            <span className="mb-[2px] ml-[8px] leading-[22px]">Thailand Dashboard</span>
            <span className="mt-[3px] mr-[11px] ml-auto flex h-[19px] w-[40px] items-center justify-center rounded-[9px] bg-[#00a65a] pb-[1px] text-[11.8px] font-bold text-white">
              new
            </span>
          </div>
        </aside>

        <main className="flex min-w-0 flex-1 flex-col">
          <h1 className="mt-[36px] h-[50px] text-[29.4px] leading-[38px]">WORLD PANDEMIC</h1>
          <div className="grid grid-cols-4 gap-x-[66px] pr-[18px] pl-[33px]">
            {CARDS.map((c) => (
              <Card key={c.title} {...c} />
            ))}
          </div>

          <div className="relative mt-[22px] flex h-[440px] shrink-0 border-r border-[#808080] bg-[#ddd]">
            <div className="w-[17px] shrink-0 bg-[#808080]" />
            <div className="w-[225px] shrink-0 pt-[11px] pl-[11px]">
              <div className="w-[37px] rounded-[4px] border-2 border-black/20 bg-clip-padding">
                <div className="flex h-[33px] items-center justify-center rounded-t-[2px] border-b border-[#ccc] bg-white pt-[5px]">
                  <svg className="h-[14px] w-[14px]" viewBox="0 0 14 14" stroke="#000" strokeWidth="2.7">
                    <path d="M0 7H14M7 0V14" />
                  </svg>
                </div>
                <div className="flex h-[33px] items-center justify-center rounded-b-[2px] bg-white pt-[4px]">
                  <svg className="h-[14px] w-[14px]" viewBox="0 0 14 14" stroke="#000" strokeWidth="2.7">
                    <path d="M0 7H14" />
                  </svg>
                </div>
              </div>
            </div>
            <WorldMap />
            <Tooltip />
            <div className="absolute right-0 bottom-0 flex h-[18px] w-[282px] items-center bg-white/70 pl-[5px] font-['Liberation_Sans',Arial,sans-serif] text-[12.22px] whitespace-pre text-[#333]">
              <span className="text-[#0078a8]">Leaflet</span> | © <span className="text-[#0078a8]">OpenStreetMap</span> contributors ©{" "}
              <span className="text-[#0078a8]">CARTO</span>
            </div>
          </div>

          <footer className="pt-[5px] pl-[16.5px] text-[13.8px] leading-[27px]">
            <p>Source from Johns Hopkins repo: https://github.com/CSSEGISandData/COVID-19</p>
            <p>©2022 highwaynumber12@gmail.com</p>
          </footer>
        </main>
      </div>
    </div>
  );
}
